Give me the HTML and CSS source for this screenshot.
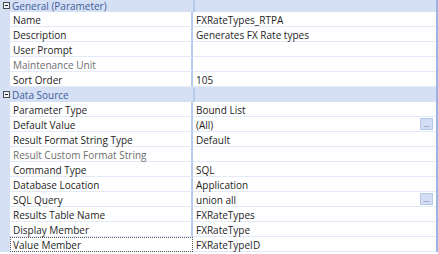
FILE: index.html
```html
<!DOCTYPE html>
<html>
<head>
  <title>Parameter Properties</title>
  <link rel="stylesheet" href="styles.css">
</head>
<body>
  <div class="grid">
    <div class="category first">
      <span class="toggle"></span>
      <span class="cat-label">General (Parameter)</span>
      <span class="cat-rest"></span>
    </div>
    <div class="row"><span class="gutter"></span><span class="name">Name</span><span class="value">FXRateTypes_RTPA</span></div>
    <div class="row"><span class="gutter"></span><span class="name">Description</span><span class="value">Generates FX Rate types</span></div>
    <div class="row"><span class="gutter"></span><span class="name">User Prompt</span><span class="value"></span></div>
    <div class="row"><span class="gutter"></span><span class="name disabled">Maintenance Unit</span><span class="value"></span></div>
    <div class="row"><span class="gutter"></span><span class="name">Sort Order</span><span class="value">105</span></div>

    <div class="category">
      <span class="toggle"></span>
      <span class="cat-label">Data Source</span>
      <span class="cat-rest"></span>
    </div>
    <div class="row"><span class="gutter"></span><span class="name">Parameter Type</span><span class="value">Bound List</span></div>
    <div class="row"><span class="gutter"></span><span class="name">Default Value</span><span class="value">(All)<button class="more">...</button></span></div>
    <div class="row"><span class="gutter"></span><span class="name">Result Format String Type</span><span class="value">Default</span></div>
    <div class="row"><span class="gutter"></span><span class="name disabled">Result Custom Format String</span><span class="value"></span></div>
    <div class="row"><span class="gutter"></span><span class="name">Command Type</span><span class="value">SQL</span></div>
    <div class="row"><span class="gutter"></span><span class="name">Database Location</span><span class="value">Application</span></div>
    <div class="row"><span class="gutter"></span><span class="name">SQL Query</span><span class="value">union all<button class="more">...</button></span></div>
    <div class="row"><span class="gutter"></span><span class="name">Results Table Name</span><span class="value">FXRateTypes</span></div>
    <div class="row"><span class="gutter"></span><span class="name">Display Member</span><span class="value">FXRateType</span></div>
    <div class="row"><span class="gutter"></span><span class="name focused">Value Member</span><span class="value">FXRateTypeID</span></div>
  </div>
</body>
</html>
```

FILE: styles.css
```css
body {
  margin: 0;
  background: #ffffff;
  font-family: "Open Sans", "Noto Sans", sans-serif;
  font-size: 10px;
  color: #1e1e1e;
  overflow: hidden;
}
.grid {
  width: 436px;
  border-right: 2px solid #9bb4e3;
}
.row,
.category {
  display: flex;
  height: 15px;
  line-height: 14px;
}
.category {
  background: #d5e0f5;
}
/* the top group header is scrolled up a little */
.category.first {
  height: 12px;
  line-height: 12px;
}
.category.first .toggle {
  margin-top: 2px;
}
.category.first .cat-label {
  margin-top: 0;
}
/* collapse box: square with a minus bar */
.toggle {
  box-sizing: border-box;
  display: flex;
  align-items: center;
  justify-content: center;
  width: 7px;
  height: 7px;
  margin: 4px 2px 0 3px;
  border: 1px solid #4b4b4b;
  background: #eef2fa;
}
.toggle::after {
  content: "";
  width: 3px;
  height: 1px;
  background: #222;
}
.cat-label {
  width: 181px;
  margin-top: 1px;
  color: #3f5d9a;
  border-right: 2px solid #b9c9ea;
}
.cat-rest {
  flex: 1;
}
.gutter {
  width: 10px;
  background: #d5e0f5;
}
.name {
  box-sizing: border-box;
  width: 183px;
  height: 15px;
  padding: 1px 0 0 3px;
  border-bottom: 1px solid #e2e9f7;
  border-right: 2px solid #b9c9ea;
  white-space: nowrap;
}
.name.disabled {
  color: #6e6e6e;
}
.name.focused {
  border: 1px dotted #555555;
  padding-left: 2px;
  padding-top: 0;
}
.value {
  box-sizing: border-box;
  flex: 1;
  display: flex;
  align-items: flex-start;
  justify-content: space-between;
  height: 15px;
  padding: 1px 3px 0 3px;
  border-bottom: 1px solid #e2e9f7;
  white-space: nowrap;
}
.more {
  width: 13px;
  height: 12px;
  padding: 0;
  border: 1px solid #b7c7e6;
  background: #d3def4;
  color: #4a5a7a;
  font-family: inherit;
  font-size: 8px;
  line-height: 6px;
}
```
